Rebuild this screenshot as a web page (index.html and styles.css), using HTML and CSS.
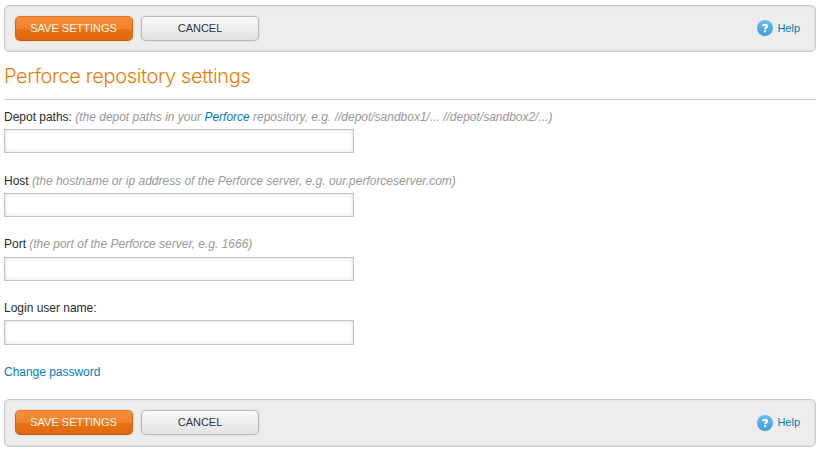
FILE: index.html
```html
<!DOCTYPE html>
<html lang="en">
<head>
<meta charset="utf-8">
<title>Perforce repository settings</title>
<link rel="stylesheet" href="styles.css">
</head>
<body>
<form class="page">
  <div class="toolbar">
    <button class="btn primary" type="button">SAVE SETTINGS</button>
    <button class="btn cancel" type="button">CANCEL</button>
    <a class="help" href="#"><svg class="help-icon" viewBox="0 0 16 16"><defs><linearGradient id="blue" x2="0" y2="1"><stop stop-color="#6bbcec"/><stop offset="1" stop-color="#3d9fe0"/></linearGradient></defs><circle cx="8" cy="8" r="8" fill="url(#blue)"/><path d="M5.9 6.1Q6 4.7 8 4.7T10.1 6.3Q10.1 7.2 9 7.8Q8 8.2 8 9.2M8 10.2V12.2" fill="none" stroke="#fff" stroke-width="2"/></svg><span>Help</span></a>
  </div>
  <h1 class="title">Perforce repository settings</h1>
  <div class="field">
    <label class="label" for="depot">Depot paths: <em class="hint">(the depot paths in your <a href="#">Perforce</a> repository, e.g. //depot/sandbox1/... //depot/sandbox2/...)</em></label>
    <input class="input" id="depot" type="text">
  </div>
  <div class="field host">
    <label class="label" for="host">Host <em class="hint">(the hostname or ip address of the Perforce server, e.g. our.perforceserver.com)</em></label>
    <input class="input" id="host" type="text">
  </div>
  <div class="field port">
    <label class="label" for="port">Port <em class="hint">(the port of the Perforce server, e.g. 1666)</em></label>
    <input class="input" id="port" type="text">
  </div>
  <div class="field login">
    <label class="label" for="login">Login user name:</label>
    <input class="input" id="login" type="text">
  </div>
  <a class="change" href="#">Change password</a>
  <div class="toolbar bottom">
    <button class="btn primary" type="button">SAVE SETTINGS</button>
    <button class="btn cancel" type="button">CANCEL</button>
    <a class="help" href="#"><svg class="help-icon" viewBox="0 0 16 16"><circle cx="8" cy="8" r="8" fill="url(#blue)"/><path d="M5.9 6.1Q6 4.7 8 4.7T10.1 6.3Q10.1 7.2 9 7.8Q8 8.2 8 9.2M8 10.2V12.2" fill="none" stroke="#fff" stroke-width="2"/></svg><span>Help</span></a>
  </div>
</form>
</body>
</html>
```
FILE: styles.css
```css
* { box-sizing: border-box; }
body { margin: 0; background: #fff; color: #2b2b2b; font: 12px/16px "Liberation Sans", Arial, sans-serif; }
.page { padding: 5px 5px 0 4px; }
a { color: #087bbd; text-decoration: none; }
.toolbar { display: flex; align-items: flex-start; gap: 8px; height: 47px; padding: 10px 15px 0 10px; background: #ededed; border: 1px solid #c8c8c8; border-radius: 5px; box-shadow: inset 0 0 3px #d8d8d8; }
.toolbar.bottom { height: 48px; }
.btn { width: 118px; height: 25px; padding: 0 1px 0 0; border: 1px solid #b8b8b8; border-radius: 5px; background: linear-gradient(#fafafa, #e1e1e1); background-origin: border-box; box-shadow: 0 0 2px #ccc; color: #333; font: 11px/23px "Liberation Sans", Arial, sans-serif; }
.cancel { padding: 0; }
.primary { color: #fff5ec; border-color: #dc7420 #d9690f #c65905; background: linear-gradient(#f68f3e, #f2822d 50%, #e97413 51%, #df670a); background-origin: border-box; }
.help { display: flex; align-items: center; gap: 4px; height: 24px; margin-left: auto; font-size: 11px; }
.help-icon { width: 16px; height: 16px; }
.bottom .help-icon { margin-top: 2px; }
.title { height: 48px; margin: 0 0 9px; padding-top: 11px; border-bottom: 1px solid #c8c8c8; color: #e77d08; font: 300 20px/26px Inter, sans-serif; letter-spacing: -.36px; }
.field { height: 64px; }
.host { height: 63px; }
.label { display: block; height: 20px; white-space: nowrap; letter-spacing: -.01px; }
.port .label { height: 21px; }
.hint { color: #999; }
.input { display: block; width: 350px; height: 24px; border: 1px solid #c3c3c3; box-shadow: inset 0 0 4px #ddd; background: #fff; }
.login .input { height: 25px; }
.change { display: block; width: max-content; height: 35px; letter-spacing: -.03px; }
```
